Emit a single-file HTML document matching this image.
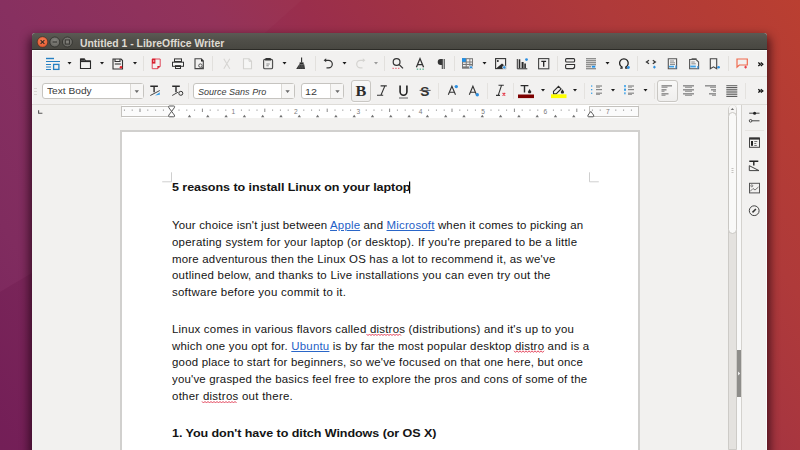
<!DOCTYPE html>
<html><head><meta charset="utf-8">
<style>
*{margin:0;padding:0;box-sizing:border-box}
html,body{width:800px;height:450px;overflow:hidden}
body{position:relative;font-family:"Liberation Sans",sans-serif;background:#8a2a5c}
.a{position:absolute}
#bg{left:0;top:0;width:800px;height:450px;
 background:linear-gradient(56deg,#77205a 0%,#7e285c 14%,#852c5d 27.5%,#912f57 45.6%,#9a2e4c 54.7%,#a03244 63.7%,#a8363f 72.8%,#af3a3a 81.9%,#b43c35 90.9%,#ba3f31 100%)}
#win{left:32px;top:33px;width:735px;height:417px;background:#f2f1f0;border-radius:3px 3px 0 0;box-shadow:0 6px 10px 3px rgba(25,0,12,.65)}
#title{left:32px;top:33px;width:735px;height:17px;background:linear-gradient(#5b5a54,#4f4e48 50%,#484741);border-bottom:1px solid #2c2b27;border-radius:3px 3px 0 0}
.tt{left:80.4px;top:38.6px;font-size:10px;font-weight:bold;color:#dfdbd2;white-space:nowrap;line-height:10px;transform-origin:0 0;transform:scaleX(1.04)}
.wb{top:37px;width:11px;height:11px;border-radius:50%}
.hl{height:1px}
.txt{white-space:nowrap;color:#151515;transform-origin:0 0;line-height:1}
.combo{height:16px;background:#fff;border:1px solid #c6c4c0;border-radius:3px}
.dl{line-height:normal;color:#141414}
.lk{color:#1f5fc6;text-decoration:underline;text-decoration-color:#2a66c8;text-underline-offset:1px}
.sp{}
.dd{top:0;height:14px;border-left:1px solid #dad8d4;background:#f7f6f5}
</style></head><body>
<div id="bg" class="a"></div>
<svg class="a" style="left:0;top:0" width="800" height="450"><polygon points="0,0 302,0 265,33 32,273 0,292" fill="#ffffff" opacity="0.02"/><polygon points="0,292 32,273 32,450 0,450" fill="#000" opacity="0.03"/></svg>
<div id="win" class="a"></div>
<div id="title" class="a"></div>
<svg class="a" style="left:0;top:0" width="800" height="60" viewBox="0 0 800 60">
<defs><radialGradient id="gc" cx="50%" cy="40%" r="60%"><stop offset="0" stop-color="#f7845a"/><stop offset="1" stop-color="#e5582e"/></radialGradient>
<radialGradient id="gg" cx="50%" cy="40%" r="60%"><stop offset="0" stop-color="#86857f"/><stop offset="1" stop-color="#64635e"/></radialGradient></defs>
<circle cx="42.5" cy="42" r="5.3" fill="url(#gc)" stroke="#3a2a22" stroke-width="0.6"/>
<path d="M40.6 40.1l3.8 3.8M44.4 40.1l-3.8 3.8" stroke="#3b2b24" stroke-width="1.2"/>
<circle cx="54.8" cy="42" r="5" fill="url(#gg)" stroke="#2f2e2b" stroke-width="0.8"/>
<path d="M52.6 42h4.4" stroke="#3a3936" stroke-width="1.2"/>
<circle cx="67.4" cy="42" r="5" fill="url(#gg)" stroke="#2f2e2b" stroke-width="0.8"/>
<rect x="65.3" y="39.9" width="4.2" height="4.2" fill="none" stroke="#3a3936" stroke-width="1.1"/>
</svg>
<div class="a tt">Untitled 1 - LibreOffice Writer</div>

<!-- toolbar lines -->
<div class="a" style="left:32px;top:50px;width:1px;height:400px;background:#fafafa"></div>
<div class="a hl" style="left:32px;top:50px;width:735px;background:#fbfbfa"></div>
<div class="a hl" style="left:32px;top:76px;width:735px;background:#e2e0dc"></div>
<div class="a hl" style="left:32px;top:104px;width:735px;background:#dedcd8"></div>

<!-- doc area -->
<div class="a" style="left:32px;top:105px;width:696px;height:345px;background:#f2f1ef"></div>
<div class="a" style="left:120px;top:130px;width:520px;height:330px;background:#fff;border:2px solid #d1d0ce;border-bottom:none"></div>

<!-- ruler -->
<div class="a" style="left:122px;top:105px;width:516px;height:13px;background:#fff"></div>
<div class="a" style="left:121px;top:106px;width:51px;height:11px;background:#fbfbfb;border:1.6px solid #c4c2be"></div>
<div class="a" style="left:589px;top:106px;width:50px;height:11px;background:#fbfbfb;border:1.6px solid #c4c2be"></div>

<!-- scrollbar + sidebar -->
<div class="a" style="left:728px;top:105px;width:14px;height:345px;background:#f2f1f0"></div>
<div class="a" style="left:728px;top:105px;width:9px;height:345px;background:#e4e2df;border:1px solid #cdcbc7;border-radius:4.5px 4.5px 0 0"></div>
<div class="a" style="left:729px;top:105px;width:7px;height:9px;background:#f6f5f4;border-radius:3.5px 3.5px 0 0"></div>
<div class="a" style="left:728px;top:112px;width:9px;height:122px;background:#f9f9f8;border:1px solid #c9c7c3;border-radius:4.5px"></div>
<div class="a" style="left:737px;top:105px;width:4px;height:345px;background:#f9f9f9"></div>
<div class="a" style="left:741px;top:105px;width:1px;height:345px;background:#d4d2ce"></div>
<div class="a" style="left:742px;top:105px;width:25px;height:345px;background:#f2f1f0"></div>
<div class="a" style="left:766px;top:105px;width:1px;height:345px;background:#fbfbfb"></div>
<div class="a" style="left:737px;top:350px;width:4px;height:47px;background:#8e8d8a"></div>
<svg class="a" style="left:0;top:0" width="800" height="450"><path d="M730.7 110h3.4l-1.7-2.1z" fill="#707070"/><path d="M738.2 371.5v4l1.8-2z" fill="#fff"/></svg>

<!-- combos -->
<div class="a combo" style="left:42px;top:83px;width:102px"><div class="a dd" style="left:87px;width:13px"></div></div>
<div class="a combo" style="left:193px;top:83px;width:102px"><div class="a dd" style="left:87px;width:13px"></div></div>
<div class="a combo" style="left:301px;top:83px;width:43px"><div class="a dd" style="left:28px;width:13px"></div></div>
<div class="a txt" style="left:46.5px;top:86.4px;font-size:9.6px;color:#3a3a3a;transform:scaleX(1.06)">Text Body</div>
<div class="a txt" style="left:197.5px;top:87.4px;font-size:9.6px;font-style:italic;color:#3a3a3a;transform:scaleX(0.94)">Source Sans Pro</div>
<div class="a txt" style="left:304.6px;top:87.2px;font-size:9.6px;color:#3a3a3a;transform:scaleX(1.12)">12</div>

<!-- pressed buttons -->
<div class="a" style="left:351px;top:80px;width:20px;height:22px;border:1px solid #c9c7c3;border-radius:3px;background:linear-gradient(#f9f9f8,#efeeed);box-shadow:0 1px 0 rgba(255,255,255,.8)"></div>
<div class="a" style="left:657px;top:80px;width:21px;height:22px;border:1px solid #c9c7c3;border-radius:3px;background:linear-gradient(#f9f9f8,#efeeed);box-shadow:0 1px 0 rgba(255,255,255,.8)"></div>

<!-- ICONS -->
<svg class="a" style="left:0;top:0" width="800" height="450" viewBox="0 0 800 450" id="icons">
<g id="tb1icons" fill="none" stroke-linecap="butt">
<!-- grip -->
<g fill="#ecebe8" opacity="0"><rect x="34" y="57" width="2" height="1"/><rect x="34" y="60" width="2" height="1"/><rect x="34" y="63" width="2" height="1"/><rect x="34" y="66" width="2" height="1"/><rect x="34" y="69" width="2" height="1"/></g>
<!-- New -->
<g stroke="#2680c2">
<path d="M46 58.5h8" stroke-width="1.4"/>
<path d="M46 61.5h14" stroke-width="1"/>
<path d="M46 64.5h5M46 67h5M46 69.5h5" stroke-width="1"/>
<rect x="53.6" y="64.4" width="5.3" height="5" stroke-width="1.3"/>
</g>
<!-- dropdown arrows -->
<g fill="#1a1a1a">
<path d="M67.5 62h4l-2 2.5z"/>
<path d="M100 62h4l-2 2.5z"/>
<path d="M133 62h4l-2 2.5z"/>
<path d="M282.5 62h4l-2 2.5z"/>
<path d="M342.5 62h4l-2 2.5z"/>
<path d="M482.5 62h4l-2 2.5z"/>
<path d="M605.5 62h4l-2 2.5z"/>
</g>
<path d="M374 62h4l-2 2.5z" fill="#9a9a9a"/>
<!-- Open folder -->
<g stroke="#2a2a2a" stroke-width="1.1">
<path d="M80.5 59v9.5h10v-7.5h-5l-1-2z"/>
<path d="M80.5 61.3h10" stroke-width="1.6"/>
</g>
<rect x="80.5" y="58.6" width="4" height="2" fill="#2a2a2a"/>
<!-- Save -->
<g stroke="#333" stroke-width="1.1">
<path d="M113 59h8l1.5 1.5v8.5h-9.5z"/>
<path d="M115 59v2.5h5v-2.5"/>
<path d="M114.8 64h6"/>
</g>
<circle cx="121" cy="67.3" r="1.3" fill="#e8202a"/>
<!-- separators -->
<g fill="#e2e0dd">
<rect x="143" y="56" width="1" height="15"/>
<rect x="212" y="56" width="1" height="15"/>
<rect x="315" y="56" width="1" height="15"/>
<rect x="384" y="56" width="1" height="15"/>
<rect x="454" y="56" width="1" height="15"/>
<rect x="557" y="56" width="1" height="15"/>
<rect x="637" y="56" width="1" height="15"/>
<rect x="728" y="56" width="1" height="15"/>
</g>
<!-- PDF -->
<path d="M152.2 59h8v7.3l-2.4 2.4h-5.6z" stroke="#e0485a" stroke-width="1"/>
<path d="M152 58.8h3.4v4.8h-3.4z" fill="#d8202e"/>
<rect x="153.1" y="60.3" width="1.2" height="1.4" fill="#f6d6da"/>
<path d="M160.4 66l-3 0v3z" fill="#d8202e"/>
<!-- Print -->
<g stroke="#333" stroke-width="1">
<rect x="174.5" y="58.9" width="7" height="2.6"/>
<rect x="172.5" y="62.2" width="11" height="4.1" fill="#f6f6f5"/>
<rect x="175.5" y="66.3" width="5" height="2.2"/>
</g>
<rect x="175" y="65.3" width="6" height="1.2" fill="#222"/>
<!-- Print preview -->
<path d="M195 58.8h6.3l2 2v7.8h-8.3z" stroke="#444" stroke-width="1.1"/>
<path d="M201 58.8l2.5 2.6h-2.5z" fill="#222"/>
<circle cx="200.4" cy="65.6" r="1.7" stroke="#555" stroke-width="1" fill="#f2f1f0"/>
<path d="M201.6 66.9l1.8 1.8" stroke="#555" stroke-width="1.1"/>
<!-- Cut disabled -->
<path d="M223.8 58.8l6 10M229.8 58.8l-6 10" stroke="#d6d5d2" stroke-width="1.1"/>
<!-- Copy disabled -->
<path d="M243.5 58.8h5.5l2.5 2.5v7.5h-8z" stroke="#d4d3d0" stroke-width="1.1" fill="#f6f6f5"/>
<path d="M249 58.8v2.5h2.5" stroke="#d4d3d0" stroke-width="1"/>
<!-- Paste -->
<rect x="263.6" y="59.4" width="9" height="9.4" rx="1.3" stroke="#4a4a4a" stroke-width="1.1" fill="#e9e8e6"/>
<path d="M265.6 62.6h5v4.6h-5z" fill="#fafafa"/>
<path d="M266.3 64h3.5M266.3 65.8h2.5" stroke="#666" stroke-width="0.8"/>
<path d="M265.6 58h5l0.6 2.4h-6.2z" fill="#333"/>
<!-- Clone brush -->
<path d="M301.6 57.6v5" stroke="#2a2a2a" stroke-width="1.1"/>
<rect x="299.6" y="62.4" width="4" height="1.6" fill="#2a2a2a"/>
<path d="M299.2 64.2h5l0.8 4.8h-8.8z" fill="#333"/>
<path d="M298.6 68.6l1.2-3.8M300.8 68.6l0.6-3.8M302.8 68.6l0.2-3.8" stroke="#777" stroke-width="0.5"/>
<!-- Undo -->
<path d="M325.5 60.3h3a3.8 3.8 0 0 1 0 7.6h-2" stroke="#333" stroke-width="1.2"/>
<path d="M323.6 60.3l2.6-2v4z" fill="#333"/>
<!-- Redo disabled -->
<path d="M363.5 60.3h-3a3.8 3.8 0 0 0 0 7.6h2" stroke="#d4d3d0" stroke-width="1.2"/>
<path d="M365.4 60.3l-2.6-2v4z" fill="#d4d3d0"/>
<!-- Find -->
<circle cx="396.6" cy="62" r="3.4" stroke="#333" stroke-width="1.2"/>
<path d="M399.2 64.6l3.8 3.8" stroke="#333" stroke-width="1.3"/>
<g fill="#e8455a"><rect x="392.5" y="67.8" width="1.3" height="1"/><rect x="395.3" y="67.8" width="1.3" height="1"/><rect x="398.1" y="67.8" width="1.3" height="1"/></g>
<!-- Spelling -->
<path d="M416.4 67.2l3.6-8.6 3.6 8.6M417.6 64.6h4.8" stroke="#333" stroke-width="1.3"/>
<g fill="#3aa77a"><rect x="416.8" y="68.6" width="1.4" height="1.1"/><rect x="419.6" y="68.6" width="1.4" height="1.1"/><rect x="422.4" y="68.6" width="1.4" height="1.1"/></g>
<!-- Pilcrow -->
<path d="M442.2 59h-1.5a3 3 0 0 0 0 6h1.5z" fill="#333"/>
<path d="M442.3 59v10M444.2 59v10" stroke="#444" stroke-width="1.1"/>
<!-- Table -->
<g fill="#666">
<rect x="462" y="58.2" width="11" height="10.5" fill="#777"/>
</g>
<g fill="#f2f1f0">
<rect x="463" y="62.5" width="2.7" height="1.4"/><rect x="463" y="65" width="2.7" height="1.4"/>
<rect x="466.7" y="59.2" width="2.7" height="2.3"/><rect x="466.7" y="62.5" width="2.7" height="1.4"/><rect x="466.7" y="65" width="2.7" height="1.4"/>
<rect x="470.3" y="59.2" width="1.7" height="2.3"/><rect x="470.3" y="62.5" width="1.7" height="1.4"/>
</g>
<rect x="462" y="58.2" width="3.8" height="3.6" fill="#1e90e8"/>
<circle cx="471" cy="67.3" r="1.6" fill="#2d8fe0" stroke="#f2f1f0" stroke-width="0.8"/>
<!-- Image -->
<rect x="495.6" y="58.6" width="10" height="10" stroke="#333" stroke-width="1.1"/>
<circle cx="497.8" cy="61" r="1" fill="#222"/>
<path d="M496 68.5l6-5 3 2.5v2.5z" fill="#2a2a2a"/>
<circle cx="504.3" cy="67.4" r="1.7" fill="#2d8fe0" stroke="#f2f1f0" stroke-width="0.8"/>
<!-- Chart -->
<path d="M517.3 59v9.8h10" stroke="#333" stroke-width="1"/>
<rect x="518.7" y="59.3" width="1.6" height="9" fill="#2a2a2a"/>
<rect x="521.6" y="62" width="2" height="6.3" fill="#2a2a2a"/>
<rect x="524.3" y="63.5" width="1.6" height="4.8" fill="#2a2a2a"/>
<circle cx="526.5" cy="59.6" r="1.4" fill="#2d8fe0"/>
<!-- Text box -->
<rect x="538.6" y="58.6" width="10.2" height="10.2" stroke="#444" stroke-width="1.1"/>
<path d="M541.3 61.3h4.8M543.7 61.3v5.5" stroke="#222" stroke-width="1.3"/>
<!-- Page/section -->
<g stroke="#333" stroke-width="1.1">
<rect x="565.6" y="58.6" width="9" height="3.4" rx="1"/>
<path d="M566.6 64.5h8v2.7l-1.3 1.4h-6.7a1 1 0 0 1-1-1v-2.1a1 1 0 0 1 1-1z"/>
</g>
<path d="M572.7 68.6l1.9-1.9v1.9z" fill="#333"/>
<!-- Fields -->
<g fill="#777">
<rect x="586" y="58.2" width="10" height="1.1"/><rect x="586" y="60.2" width="10" height="1.1"/><rect x="586" y="62.2" width="10" height="1.1"/><rect x="586" y="64.2" width="10" height="1.1"/><rect x="586" y="66.2" width="5" height="1.1"/><rect x="586" y="68.2" width="10" height="1.1"/>
</g>
<rect x="591.8" y="65.8" width="3.5" height="1.8" fill="#1e90e8"/>
<!-- Omega -->
<path d="M620.2 68.2h1.8v-1.2a4.3 4.3 0 1 1 3.8 0v1.2h1.8" stroke="#222" stroke-width="1.3"/>
<circle cx="628.4" cy="67.5" r="1.4" fill="#2d8fe0"/>
<!-- Hyperlink -->
<path d="M649 60.2l-2.6 1.8 2.6 1.8M652.8 60.2l2.6 1.8-2.6 1.8" stroke="#333" stroke-width="1.2"/>
<path d="M654.4 65.8v2.6M653.1 67.1h2.6" stroke="#2d8fe0" stroke-width="1.1"/>
<!-- Footnote -->
<g stroke="#555" stroke-width="1.1"><path d="M668.3 58.8h8.3v10h-8.3z"/></g>
<path d="M670 61h4M670 62.8h5M670 64.5h5" stroke="#777" stroke-width="0.8"/>
<rect x="669" y="65.8" width="5" height="1.6" fill="#3aa0e8"/>
<rect x="675.4" y="65.5" width="1.2" height="3" fill="#2d8fe0"/>
<!-- Endnote -->
<g stroke="#555" stroke-width="1.1"><path d="M689.6 59.5h6.5l2.5 2.5v6.8h-9z"/><path d="M691.6 58.8h5"/></g>
<path d="M691.3 62h3.5M691.3 63.8h4.5" stroke="#777" stroke-width="0.8"/>
<rect x="690.3" y="65.6" width="5.5" height="1.8" fill="#3aa0e8"/>
<rect x="697.3" y="66" width="1.2" height="2.6" fill="#2d8fe0"/>
<!-- Bookmark -->
<path d="M710.3 58.8h6.4v10l-3.2-2-3.2 2z" stroke="#444" stroke-width="1.1"/>
<circle cx="718.6" cy="67.3" r="1.3" fill="#2d8fe0"/>
<!-- Comment -->
<path d="M737 59h10.3v6h-8l-2.3 2.2z" stroke="#ef6a4e" stroke-width="1.2"/>
<path d="M745.6 65.8v2.6M744.3 67.1h2.6" stroke="#e8404a" stroke-width="1.1"/>
<!-- >> -->
<path d="M758.3 62.6l2 1.7-2 1.7M760.8 62.6l2 1.7-2 1.7" stroke="#111" stroke-width="1.3"/>
</g>

<g id="tb2icons" fill="none">
<!-- grip tb2 -->
<g fill="#d9d7d3"><rect x="34" y="88" width="3" height="1"/><rect x="34" y="91" width="3" height="1"/><rect x="34" y="94" width="3" height="1"/></g>
<!-- combo arrows -->
<g fill="#6a6a6a">
<path d="M134.6 90.3h4.4l-2.2 2.6z"/>
<path d="M285.4 90.3h4.4l-2.2 2.6z"/>
<path d="M335.3 90.3h4.4l-2.2 2.6z"/>
</g>
<!-- separators tb2 -->
<g fill="#e4e2df">
<rect x="188" y="83" width="1" height="16"/>
<rect x="438" y="83" width="1" height="16"/>
<rect x="487" y="83" width="1" height="16"/>
<rect x="513" y="83" width="1" height="16"/>
<rect x="584" y="83" width="1" height="16"/>
<rect x="654" y="83" width="1" height="16"/>
<rect x="745" y="83" width="1" height="16"/>
</g>
<!-- Update style -->
<path d="M150.3 86.2h7.6M154.1 86.2v6" stroke="#2a2a2a" stroke-width="1.4"/>
<path d="M150.3 95.5l9.5-5" stroke="#333" stroke-width="0.9"/>
<path d="M155 95.5l4.8-3.2v2.4z" fill="#3aa0e8"/>
<!-- New style -->
<path d="M172.2 86.2h7.6M176 86.2v6" stroke="#2a2a2a" stroke-width="1.4"/>
<path d="M172.2 95.5l6-3.4" stroke="#333" stroke-width="0.9"/>
<circle cx="180.8" cy="93.3" r="2" stroke="#333" stroke-width="1"/>
<!-- B -->
<text x="0" y="0" font-family="Liberation Serif" font-weight="bold" font-size="13.5" fill="#2a2a2a" transform="translate(355.6 95.6) scale(1.2 1.05)">B</text>
<!-- I -->
<path d="M380.6 85.9h6.2M377 95.2h6.2M384.9 85.9l-4 9.3" stroke="#333" stroke-width="1.1"/>
<!-- U -->
<path d="M400.1 85.4v6.4a3.4 3.4 0 0 0 6.8 0v-6.4" stroke="#222" stroke-width="1.6"/>
<rect x="399" y="97.3" width="9" height="1.4" fill="#8a8a8a"/>
<!-- S -->
<text x="0" y="0" font-family="Liberation Sans" font-weight="bold" font-size="13" fill="#333" transform="translate(420.3 95.5) scale(1.05 1)">S</text>
<path d="M419.6 90.4h11" stroke="#555" stroke-width="1"/>
<!-- Superscript -->
<path d="M448.3 94.8l3.6-8.6 3.6 8.6M449.5 92.2h4.8" stroke="#333" stroke-width="1.1"/>
<circle cx="456.3" cy="86.6" r="1.7" fill="#2d8fe0"/>
<!-- Subscript -->
<path d="M469.3 94.8l3.6-8.6 3.6 8.6M470.5 92.2h4.8" stroke="#333" stroke-width="1.1"/>
<circle cx="477.3" cy="94.8" r="1.7" fill="#2d8fe0"/>
<!-- Clear formatting -->
<path d="M498.5 85.2h5.3M501.6 85.2l-3.4 10.2M496 95.4h4" stroke="#333" stroke-width="1.1"/>
<path d="M502.6 93l2.6 2.6M505.2 93l-2.6 2.6" stroke="#e43040" stroke-width="1.1"/>
<!-- Font color -->
<path d="M520.6 85.6h7.8M524.5 85.6v7" stroke="#2a2a2a" stroke-width="1.4"/>
<path d="M529.6 89l1.4 2.3a1.5 1.5 0 1 1-2.8 0z" fill="#2a2a2a"/>
<rect x="518" y="94.5" width="16" height="3.6" fill="#7d0000"/>
<path d="M541 89h4l-2 2.5z" fill="#1a1a1a"/>
<!-- Highlight -->
<path d="M553.5 91.3l5-5 2.6 2.6-5 5h-2.6z" stroke="#2a2a2a" stroke-width="1.1"/>
<path d="M562.4 89.2l1.4 2.3a1.5 1.5 0 1 1-2.8 0z" fill="#2a2a2a"/>
<rect x="551" y="94.3" width="15.5" height="3.8" fill="#ffff00"/>
<path d="M573 89h4l-2 2.5z" fill="#1a1a1a"/>
<!-- Bullets -->
<g fill="#3aa0e8"><rect x="591" y="85.4" width="1.3" height="1.3"/><rect x="591" y="89" width="1.3" height="1.3"/><rect x="591" y="92.6" width="1.3" height="1.3"/></g>
<g fill="#888"><rect x="596" y="85.4" width="6" height="1.2"/><rect x="596" y="89" width="6" height="1.2"/><rect x="596" y="92.6" width="6" height="1.2"/><rect x="596" y="86.8" width="4" height="0.8"/><rect x="596" y="94" width="4" height="0.8"/></g>
<path d="M611 89h4l-2 2.5z" fill="#1a1a1a"/>
<!-- Numbering -->
<g fill="#3aa0e8"><rect x="624.2" y="85" width="1.6" height="2.2"/><rect x="624" y="88.6" width="2" height="2.2"/><rect x="624.2" y="92.3" width="1.4" height="2"/></g>
<g fill="#888"><rect x="628" y="85.4" width="6" height="1.2"/><rect x="628" y="89" width="6" height="1.2"/><rect x="628" y="92.6" width="6" height="1.2"/><rect x="628" y="86.8" width="4" height="0.8"/><rect x="628" y="94" width="4" height="0.8"/></g>
<path d="M643.5 89h4l-2 2.5z" fill="#1a1a1a"/>
<!-- Align left -->
<g fill="#6e6e6e">
<rect x="661.5" y="85.3" width="10.5" height="1.1"/><rect x="661.5" y="86.8" width="6" height="0.8"/>
<rect x="661.5" y="89.3" width="5" height="1.1"/><rect x="661.5" y="90.8" width="3" height="0.8"/>
<rect x="661.5" y="93.3" width="7" height="1.1"/><rect x="661.5" y="94.8" width="4" height="0.8"/>
</g>
<!-- Align center -->
<g fill="#6e6e6e">
<rect x="683" y="85.3" width="11" height="1.1"/><rect x="685" y="86.8" width="7" height="0.8"/>
<rect x="683" y="89.3" width="11" height="1.1"/><rect x="685" y="90.8" width="7" height="0.8"/>
<rect x="683" y="93.3" width="11" height="1.1"/><rect x="685" y="94.8" width="7" height="0.8"/>
</g>
<!-- Align right -->
<g fill="#6e6e6e">
<rect x="705" y="85.3" width="11" height="1.1"/><rect x="710" y="86.8" width="6" height="0.8"/>
<rect x="711" y="89.3" width="5" height="1.1"/><rect x="713" y="90.8" width="3" height="0.8"/>
<rect x="709" y="93.3" width="7" height="1.1"/><rect x="712" y="94.8" width="4" height="0.8"/>
</g>
<!-- Justify -->
<g fill="#5e5e5e">
<rect x="726.3" y="85.2" width="11" height="1"/><rect x="726.3" y="87" width="11" height="1"/><rect x="726.3" y="88.8" width="11" height="1"/><rect x="726.3" y="90.6" width="11" height="1"/><rect x="726.3" y="92.4" width="11" height="1"/><rect x="726.3" y="94.2" width="11" height="1"/><rect x="726.3" y="96" width="11" height="1"/>
</g>
<!-- >> tb2 -->
<path d="M758.3 89.2l2 1.7-2 1.7M760.8 89.2l2 1.7-2 1.7" stroke="#111" stroke-width="1.3"/>
<!-- ruler corner mark -->
<path d="M38.6 110.2v3h3.8" stroke="#555" stroke-width="1.1"/>
<!-- sidebar icons -->
<g fill="#b8b6b2"><rect x="731.5" y="168" width="2" height="0.8"/><rect x="731.5" y="170" width="2" height="0.8"/><rect x="731.5" y="172" width="2" height="0.8"/></g>
<rect x="745" y="130" width="19" height="1" fill="#e6e4e1"/>
<path d="M749.2 113.2h10.3M749.2 120.8h10.3" stroke="#444" stroke-width="1"/>
<circle cx="754.6" cy="113.2" r="1.5" fill="#222"/>
<circle cx="750.6" cy="120.8" r="1.3" fill="#f2f1f0" stroke="#444" stroke-width="1"/>
<rect x="749.5" y="138" width="10" height="9.3" stroke="#444" stroke-width="1"/>
<rect x="749.5" y="137.6" width="10" height="2" fill="#333"/>
<rect x="751" y="141" width="2" height="4.8" fill="#222"/>
<g fill="#666"><rect x="754.3" y="141" width="3" height="0.9"/><rect x="754.3" y="143" width="2" height="0.9"/><rect x="754.3" y="145" width="2.5" height="0.9"/></g>
<path d="M749.3 161.3h9M753.8 161.3v4.2" stroke="#222" stroke-width="1.4"/>
<path d="M749.3 165.7v4.9h9.7z" stroke="#444" stroke-width="1"/>
<rect x="749.5" y="183.3" width="10" height="9.6" stroke="#555" stroke-width="1"/>
<circle cx="751.8" cy="185.8" r="1" stroke="#666" stroke-width="0.8"/>
<path d="M750 191.5l3-3 2 1.5 3.5-3" stroke="#666" stroke-width="0.9"/>
<circle cx="754.2" cy="210.7" r="4.9" stroke="#444" stroke-width="1"/>
<path d="M752.5 212.4l3.4-3.4" stroke="#333" stroke-width="1.5"/>
</g>

<g id='ruler'>
<rect x="123.9" y="109.5" width="1" height="1.3" fill="#999"/>
<rect x="131.7" y="109.5" width="1" height="1.3" fill="#999"/>
<rect x="139.5" y="108.6" width="1" height="3.4" fill="#888"/>
<rect x="147.3" y="109.5" width="1" height="1.3" fill="#999"/>
<rect x="155.1" y="109.5" width="1" height="1.3" fill="#999"/>
<rect x="162.9" y="109.5" width="1" height="1.3" fill="#999"/>
<rect x="178.5" y="109.5" width="1" height="1.3" fill="#999"/>
<rect x="186.3" y="109.5" width="1" height="1.3" fill="#999"/>
<rect x="194.1" y="109.5" width="1" height="1.3" fill="#999"/>
<rect x="201.9" y="108.6" width="1" height="3.4" fill="#888"/>
<rect x="209.7" y="109.5" width="1" height="1.3" fill="#999"/>
<rect x="217.5" y="109.5" width="1" height="1.3" fill="#999"/>
<rect x="225.3" y="109.5" width="1" height="1.3" fill="#999"/>
<text x="231.6" y="113.6" font-family="Liberation Sans" font-size="6.6" fill="#7a7a7a">1</text>
<rect x="240.9" y="109.5" width="1" height="1.3" fill="#999"/>
<rect x="248.7" y="109.5" width="1" height="1.3" fill="#999"/>
<rect x="256.5" y="109.5" width="1" height="1.3" fill="#999"/>
<rect x="264.3" y="108.6" width="1" height="3.4" fill="#888"/>
<rect x="272.1" y="109.5" width="1" height="1.3" fill="#999"/>
<rect x="279.9" y="109.5" width="1" height="1.3" fill="#999"/>
<rect x="287.7" y="109.5" width="1" height="1.3" fill="#999"/>
<text x="294.0" y="113.6" font-family="Liberation Sans" font-size="6.6" fill="#7a7a7a">2</text>
<rect x="303.3" y="109.5" width="1" height="1.3" fill="#999"/>
<rect x="311.1" y="109.5" width="1" height="1.3" fill="#999"/>
<rect x="318.9" y="109.5" width="1" height="1.3" fill="#999"/>
<rect x="326.7" y="108.6" width="1" height="3.4" fill="#888"/>
<rect x="334.5" y="109.5" width="1" height="1.3" fill="#999"/>
<rect x="342.3" y="109.5" width="1" height="1.3" fill="#999"/>
<rect x="350.1" y="109.5" width="1" height="1.3" fill="#999"/>
<text x="356.4" y="113.6" font-family="Liberation Sans" font-size="6.6" fill="#7a7a7a">3</text>
<rect x="365.7" y="109.5" width="1" height="1.3" fill="#999"/>
<rect x="373.5" y="109.5" width="1" height="1.3" fill="#999"/>
<rect x="381.3" y="109.5" width="1" height="1.3" fill="#999"/>
<rect x="389.1" y="108.6" width="1" height="3.4" fill="#888"/>
<rect x="396.9" y="109.5" width="1" height="1.3" fill="#999"/>
<rect x="404.7" y="109.5" width="1" height="1.3" fill="#999"/>
<rect x="412.5" y="109.5" width="1" height="1.3" fill="#999"/>
<text x="418.8" y="113.6" font-family="Liberation Sans" font-size="6.6" fill="#7a7a7a">4</text>
<rect x="428.1" y="109.5" width="1" height="1.3" fill="#999"/>
<rect x="435.9" y="109.5" width="1" height="1.3" fill="#999"/>
<rect x="443.7" y="109.5" width="1" height="1.3" fill="#999"/>
<rect x="451.5" y="108.6" width="1" height="3.4" fill="#888"/>
<rect x="459.3" y="109.5" width="1" height="1.3" fill="#999"/>
<rect x="467.1" y="109.5" width="1" height="1.3" fill="#999"/>
<rect x="474.9" y="109.5" width="1" height="1.3" fill="#999"/>
<text x="481.2" y="113.6" font-family="Liberation Sans" font-size="6.6" fill="#7a7a7a">5</text>
<rect x="490.5" y="109.5" width="1" height="1.3" fill="#999"/>
<rect x="498.3" y="109.5" width="1" height="1.3" fill="#999"/>
<rect x="506.1" y="109.5" width="1" height="1.3" fill="#999"/>
<rect x="513.9" y="108.6" width="1" height="3.4" fill="#888"/>
<rect x="521.7" y="109.5" width="1" height="1.3" fill="#999"/>
<rect x="529.5" y="109.5" width="1" height="1.3" fill="#999"/>
<rect x="537.3" y="109.5" width="1" height="1.3" fill="#999"/>
<text x="543.6" y="113.6" font-family="Liberation Sans" font-size="6.6" fill="#7a7a7a">6</text>
<rect x="552.9" y="109.5" width="1" height="1.3" fill="#999"/>
<rect x="560.7" y="109.5" width="1" height="1.3" fill="#999"/>
<rect x="568.5" y="109.5" width="1" height="1.3" fill="#999"/>
<rect x="576.3" y="108.6" width="1" height="3.4" fill="#888"/>
<rect x="584.1" y="109.5" width="1" height="1.3" fill="#999"/>
<rect x="591.9" y="109.5" width="1" height="1.3" fill="#999"/>
<rect x="599.7" y="109.5" width="1" height="1.3" fill="#999"/>
<text x="606.0" y="113.6" font-family="Liberation Sans" font-size="6.6" fill="#7a7a7a">7</text>
<rect x="615.3" y="109.5" width="1" height="1.3" fill="#999"/>
<rect x="623.1" y="109.5" width="1" height="1.3" fill="#999"/>
<rect x="630.9" y="109.5" width="1" height="1.3" fill="#999"/>
<path d="M187.8 117.2h3.4l-1.7-2.4z" fill="#707070"/>
<path d="M206.1 117.2h3.4l-1.7-2.4z" fill="#707070"/>
<path d="M224.4 117.2h3.4l-1.7-2.4z" fill="#707070"/>
<path d="M242.7 117.2h3.4l-1.7-2.4z" fill="#707070"/>
<path d="M261.0 117.2h3.4l-1.7-2.4z" fill="#707070"/>
<path d="M279.3 117.2h3.4l-1.7-2.4z" fill="#707070"/>
<path d="M297.6 117.2h3.4l-1.7-2.4z" fill="#707070"/>
<path d="M315.9 117.2h3.4l-1.7-2.4z" fill="#707070"/>
<path d="M334.2 117.2h3.4l-1.7-2.4z" fill="#707070"/>
<path d="M352.5 117.2h3.4l-1.7-2.4z" fill="#707070"/>
<path d="M370.8 117.2h3.4l-1.7-2.4z" fill="#707070"/>
<path d="M389.1 117.2h3.4l-1.7-2.4z" fill="#707070"/>
<path d="M407.4 117.2h3.4l-1.7-2.4z" fill="#707070"/>
<path d="M425.7 117.2h3.4l-1.7-2.4z" fill="#707070"/>
<path d="M444.0 117.2h3.4l-1.7-2.4z" fill="#707070"/>
<path d="M462.3 117.2h3.4l-1.7-2.4z" fill="#707070"/>
<path d="M480.6 117.2h3.4l-1.7-2.4z" fill="#707070"/>
<path d="M498.9 117.2h3.4l-1.7-2.4z" fill="#707070"/>
<path d="M517.2 117.2h3.4l-1.7-2.4z" fill="#707070"/>
<path d="M535.5 117.2h3.4l-1.7-2.4z" fill="#707070"/>
<path d="M553.8 117.2h3.4l-1.7-2.4z" fill="#707070"/>
<path d="M572.1 117.2h3.4l-1.7-2.4z" fill="#707070"/>
<path d="M168.6 106.6q0-0.6 0.8-0.6h4.4q0.8 0 0.8 0.6q0 1.2-1.2 2.4l-1.8 2.4-1.8-2.4q-1.2-1.2-1.2-2.4z M168.6 116.2q0 0.6 0.8 0.6h4.4q0.8 0 0.8-0.6q0-1.2-1.2-2.4l-1.8-2.4-1.8 2.4q-1.2 1.2-1.2 2.4z" fill="#fff" stroke="#555" stroke-width="1" stroke-linejoin="round"/>
<path d="M587.8 116.2q0 0.6 0.8 0.6h4.4q0.8 0 0.8-0.6q0-1.2-1.2-2.4l-1.8-2.4-1.8 2.4q-1.2 1.2-1.2 2.4z" fill="#fff" stroke="#555" stroke-width="1" stroke-linejoin="round"/>
</g>
<g id='marks'>
<path d="M171.5 172.3v9.5h-9.3" stroke="#cfcfcf" stroke-width="1" fill="none"/>
<path d="M589.5 172.3v9.5h9.3" stroke="#cfcfcf" stroke-width="1" fill="none"/>
<rect x="409" y="181.5" width="1.2" height="12" fill="#000"/>
<polyline points="366.5,334.0 368.0,335.6 369.5,334.0 371.0,335.6 372.5,334.0 374.0,335.6 375.5,334.0 377.0,335.6 378.5,334.0 380.0,335.6 381.5,334.0 383.0,335.6 384.5,334.0 386.0,335.6 387.5,334.0 389.0,335.6 390.5,334.0 392.0,335.6 393.5,334.0 395.0,335.6 396.5,334.0 398.0,335.6 399.5,334.0 401.0,335.6" stroke="#e4475e" stroke-width="1" fill="none"/>
<polyline points="514.0,350.8 515.5,352.4 517.0,350.8 518.5,352.4 520.0,350.8 521.5,352.4 523.0,350.8 524.5,352.4 526.0,350.8 527.5,352.4 529.0,350.8 530.5,352.4 532.0,350.8 533.5,352.4 535.0,350.8 536.5,352.4 538.0,350.8 539.5,352.4 541.0,350.8 542.5,352.4 544.0,350.8" stroke="#e4475e" stroke-width="1" fill="none"/>
<polyline points="202.0,401.4 203.5,403.0 205.0,401.4 206.5,403.0 208.0,401.4 209.5,403.0 211.0,401.4 212.5,403.0 214.0,401.4 215.5,403.0 217.0,401.4 218.5,403.0 220.0,401.4 221.5,403.0 223.0,401.4 224.5,403.0 226.0,401.4 227.5,403.0 229.0,401.4 230.5,403.0 232.0,401.4 233.5,403.0 235.0,401.4 236.5,403.0" stroke="#e4475e" stroke-width="1" fill="none"/>
</g>
</svg>
<div id="doc">
<div class='a txt dl' style='left:172px;top:181.10px;font-size:11.5px;font-weight:bold;letter-spacing:-0.0572px;transform:scaleX(1.09)'>5 reasons to install Linux on your laptop</div>
<div class='a txt dl' style='left:172px;top:219.44px;font-size:11px;font-weight:normal;letter-spacing:0.1722px;transform:scaleX(1.04)'>Your choice isn't just between <u class='lk'>Apple</u> and <u class='lk'>Microsoft</u> when it comes to picking an</div>
<div class='a txt dl' style='left:172px;top:236.04px;font-size:11px;font-weight:normal;letter-spacing:0.2435px;transform:scaleX(1.04)'>operating system for your laptop (or desktop). If you're prepared to be a little</div>
<div class='a txt dl' style='left:172px;top:252.64px;font-size:11px;font-weight:normal;letter-spacing:0.1978px;transform:scaleX(1.04)'>more adventurous then the Linux OS has a lot to recommend it, as we've</div>
<div class='a txt dl' style='left:172px;top:269.04px;font-size:11px;font-weight:normal;letter-spacing:0.2461px;transform:scaleX(1.04)'>outlined below, and thanks to Live installations you can even try out the</div>
<div class='a txt dl' style='left:172px;top:286.04px;font-size:11px;font-weight:normal;letter-spacing:0.2581px;transform:scaleX(1.04)'>software before you commit to it.</div>
<div class='a txt dl' style='left:172px;top:323.04px;font-size:11px;font-weight:normal;letter-spacing:0.2137px;transform:scaleX(1.04)'>Linux comes in various flavors called distros (distributions) and it's up to you</div>
<div class='a txt dl' style='left:172px;top:339.64px;font-size:11px;font-weight:normal;letter-spacing:0.2003px;transform:scaleX(1.04)'>which one you opt for. <u class='lk'>Ubuntu</u> is by far the most popular desktop distro and is a</div>
<div class='a txt dl' style='left:172px;top:356.04px;font-size:11px;font-weight:normal;letter-spacing:0.2038px;transform:scaleX(1.04)'>good place to start for beginners, so we've focused on that one here, but once</div>
<div class='a txt dl' style='left:172px;top:373.04px;font-size:11px;font-weight:normal;letter-spacing:0.1904px;transform:scaleX(1.04)'>you've grasped the basics feel free to explore the pros and cons of some of the</div>
<div class='a txt dl' style='left:172px;top:390.04px;font-size:11px;font-weight:normal;letter-spacing:0.2648px;transform:scaleX(1.04)'>other distros out there.</div>
<div class='a txt dl' style='left:172px;top:427.10px;font-size:11.5px;font-weight:bold;letter-spacing:-0.0544px;transform:scaleX(1.09)'>1. You don't have to ditch Windows (or OS X)</div>
</div>
</body></html>
